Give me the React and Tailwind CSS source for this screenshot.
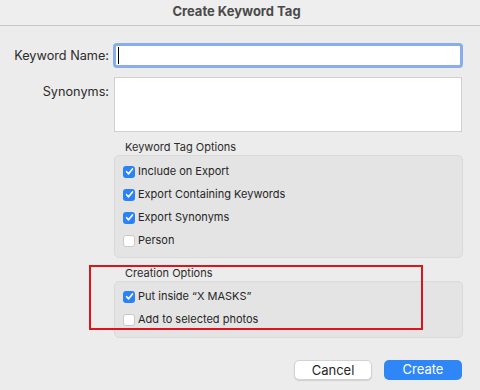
import React from "react";

function Check({ checked }) {
  return checked ? (
    <span className="flex h-[12px] w-[12px] shrink-0 items-center justify-center rounded-[3px] bg-[#2a82f7]">
      <svg width="9" height="9" viewBox="0 0 10 10" fill="none">
        <path d="M1.8 5.2 L4 7.6 L8.3 2.2" stroke="white" strokeWidth="1.8" strokeLinecap="round" strokeLinejoin="round" />
      </svg>
    </span>
  ) : (
    <span className="h-[12px] w-[12px] shrink-0 rounded-[3px] border border-[#c9c9c9] bg-white" />
  );
}

function Row({ checked, label }) {
  return (
    <div className="flex h-[23px] items-center gap-[3px] pl-[8px]">
      <Check checked={checked} />
      <span className="text-[11px] text-[#262626]">{label}</span>
    </div>
  );
}

export default function App() {
  return (
    <div
      className="relative h-[390px] w-[480px] overflow-hidden bg-[#ececec] text-[13px] text-[#262626]"
      style={{ fontFamily: "Inter, 'Noto Sans', sans-serif" }}
    >
      <div className="flex h-[26px] items-center justify-center border-b border-[#c6c6c6] bg-[#eeeeee] pb-[2px] pr-[7px]">
        <span className="text-[13px] font-bold text-[#4a4a4a]">Create Keyword Tag</span>
      </div>

      <div className="mt-[17px] flex items-center">
        <div className="w-[113px] pr-[4px] text-right text-[12.7px] text-[#2b2b2b]">Keyword Name:</div>
        <div className="h-[25px] w-[350px] rounded-[4px] border-[3px] border-[#8aaceb] bg-white">
          <div className="ml-[2px] mt-[1px] h-[17px] w-px bg-black" />
        </div>
      </div>

      <div className="mt-[9px] flex items-start">
        <div className="w-[114px] pr-[5px] pt-[5px] text-right text-[12.7px] text-[#2b2b2b]">Synonyms:</div>
        <div className="h-[55px] w-[348px] border border-[#d0d0d0] bg-white" />
      </div>

      <div className="ml-[114px] w-[349px]">
        <div className="mt-[7px] h-[16px] pl-[11px] text-[11px] leading-[16px] text-[#2b2b2b]">Keyword Tag Options</div>
        <div className="h-[103px] rounded-[5px] border border-[#d9d9d9] bg-[#e4e4e4] pt-[4px]">
          <Row checked label="Include on Export" />
          <Row checked label="Export Containing Keywords" />
          <Row checked label="Export Synonyms" />
          <Row label="Person" />
        </div>

        <div className="mt-[7px] h-[16px] pl-[11px] text-[11px] leading-[16px] text-[#2b2b2b]">Creation Options</div>
        <div className="h-[57px] rounded-[5px] border border-[#d9d9d9] bg-[#e4e4e4] pt-[3px]">
          <Row checked label={"Put inside \u201CX MASKS\u201D"} />
          <Row label="Add to selected photos" />
        </div>
      </div>

      <div className="mt-[22px] flex justify-end gap-[12px] pr-[18px]">
        <button className="h-[20px] w-[78px] rounded-[5px] border border-[#d2d2d2] bg-white text-[13px] text-[#262626] shadow-[0_1px_1px_rgba(0,0,0,0.12)]">
          Cancel
        </button>
        <button className="h-[20px] w-[78px] rounded-[5px] bg-[#2f87f7] text-[13px] text-white">
          Create
        </button>
      </div>

      <div className="pointer-events-none absolute left-[89px] top-[265px] h-[65px] w-[334px] border-2 border-[#e0131c]" />
    </div>
  );
}
